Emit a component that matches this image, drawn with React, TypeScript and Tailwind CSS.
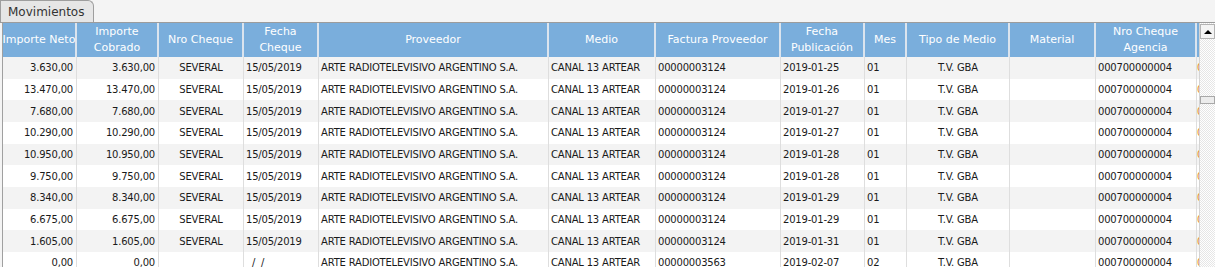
type Align = "left" | "right" | "center";

type Col = {
  key: string;
  label: string[];
  width: string;
  align: Align;
};

const cols: Col[] = [
  { key: "neto", label: ["Importe Neto"], width: "w-[74px]", align: "right" },
  { key: "cobrado", label: ["Importe", "Cobrado"], width: "w-[82px]", align: "right" },
  { key: "cheque", label: ["Nro Cheque"], width: "w-[85px]", align: "center" },
  { key: "fecha", label: ["Fecha", "Cheque"], width: "w-[75px]", align: "left" },
  { key: "proveedor", label: ["Proveedor"], width: "w-[230px]", align: "left" },
  { key: "medio", label: ["Medio"], width: "w-[107px]", align: "left" },
  { key: "factura", label: ["Factura Proveedor"], width: "w-[125px]", align: "left" },
  { key: "pub", label: ["Fecha", "Publicación"], width: "w-[84px]", align: "left" },
  { key: "mes", label: ["Mes"], width: "w-[42px]", align: "left" },
  { key: "tipo", label: ["Tipo de Medio"], width: "w-[103px]", align: "center" },
  { key: "material", label: ["Material"], width: "w-[86px]", align: "left" },
  { key: "agencia", label: ["Nro Cheque", "Agencia"], width: "w-[101px]", align: "left" },
];

type Row = Record<string, string>;

const base = {
  cheque: "SEVERAL",
  fecha: "15/05/2019",
  proveedor: "ARTE RADIOTELEVISIVO ARGENTINO S.A.",
  medio: "CANAL 13 ARTEAR",
  factura: "00000003124",
  mes: "01",
  tipo: "T.V. GBA",
  material: "",
  agencia: "000700000004",
};

const rows: Row[] = [
  { ...base, neto: "3.630,00", cobrado: "3.630,00", pub: "2019-01-25" },
  { ...base, neto: "13.470,00", cobrado: "13.470,00", pub: "2019-01-26" },
  { ...base, neto: "7.680,00", cobrado: "7.680,00", pub: "2019-01-27" },
  { ...base, neto: "10.290,00", cobrado: "10.290,00", pub: "2019-01-27" },
  { ...base, neto: "10.950,00", cobrado: "10.950,00", pub: "2019-01-28" },
  { ...base, neto: "9.750,00", cobrado: "9.750,00", pub: "2019-01-28" },
  { ...base, neto: "8.340,00", cobrado: "8.340,00", pub: "2019-01-29" },
  { ...base, neto: "6.675,00", cobrado: "6.675,00", pub: "2019-01-29" },
  { ...base, neto: "1.605,00", cobrado: "1.605,00", pub: "2019-01-31" },
  {
    ...base,
    neto: "0,00",
    cobrado: "0,00",
    cheque: "",
    fecha: "\u00a0\u00a0/\u00a0\u00a0/",
    factura: "00000003563",
    pub: "2019-02-07",
    mes: "02",
  },
];

const alignCls: Record<Align, string> = {
  left: "justify-start pl-[2px]",
  right: "justify-end pr-[3px]",
  center: "justify-center",
};

function HeaderRow() {
  return (
    <div className="flex h-[34px] shrink-0 bg-[#7aaedc] text-[11px] leading-[16px] text-white">
      {cols.map((c) => (
        <div
          key={c.key}
          className={`${c.width} flex shrink-0 flex-col items-center justify-center overflow-visible whitespace-nowrap border-r-2 border-[#dbe4ee] text-center`}
        >
          {c.label.map((l) => (
            <span key={l}>{l}</span>
          ))}
        </div>
      ))}
      <div className="w-[80px] shrink-0" />
    </div>
  );
}

function BodyRow({ row, odd }: { row: Row; odd: boolean }) {
  return (
    <div
      className={`flex h-[21.67px] shrink-0 text-[10px] tracking-[-0.2px] text-[#1a1a1a] ${odd ? "bg-white" : "bg-[#f3f3f3]"}`}
    >
      {cols.map((c) => (
        <div
          key={c.key}
          className={`${c.width} ${alignCls[c.align]} flex shrink-0 items-center overflow-hidden whitespace-nowrap border-r border-[#dedede]`}
        >
          {row[c.key]}
        </div>
      ))}
      {/* next column, cut off by the scrollbar */}
      <div className="flex w-[80px] shrink-0 items-center text-[#e48a2a]">0</div>
    </div>
  );
}

function Scrollbar() {
  return (
    <div className="flex w-[16px] shrink-0 flex-col border-l border-[#d4d4d4] bg-[repeating-conic-gradient(#e6e6e6_0_25%,#ffffff_0_50%)] bg-[length:2px_2px] pt-[1px]">
      <div className="flex h-[15px] w-[15px] items-center justify-center border border-[#b4b4b4] bg-[#f4f4f4]">
        <div className="h-0 w-0 border-x-[4px] border-b-[4px] border-x-transparent border-b-black" />
      </div>
      <div className="mt-[57px] h-[8px] w-[15px] border border-[#a8a8a8] bg-[#ececec]" />
    </div>
  );
}

export default function App() {
  return (
    <div
      className="flex h-[267px] w-[1215px] flex-col overflow-hidden bg-[#f4f4f4]"
      style={{ fontFamily: '"DejaVu Sans", Verdana, sans-serif' }}
    >
      <div className="flex h-[22px] shrink-0 items-end">
        <div className="flex h-[22px] w-[94px] items-center rounded-tr-[6px] border border-b-0 border-[#9e9e9e] bg-[#e6e6e6] pl-[7px] text-[12px] text-[#333]">
          Movimientos
        </div>
      </div>
      <div className="flex min-h-0 flex-1 border-t border-[#9c9c9c]">
        <div className="ml-[2px] flex min-w-0 flex-1 flex-col overflow-hidden border-l border-[#a0a0a0] bg-white">
          <HeaderRow />
          {rows.map((r, i) => (
            <BodyRow key={i} row={r} odd={i % 2 === 1} />
          ))}
        </div>
        <Scrollbar />
      </div>
    </div>
  );
}
